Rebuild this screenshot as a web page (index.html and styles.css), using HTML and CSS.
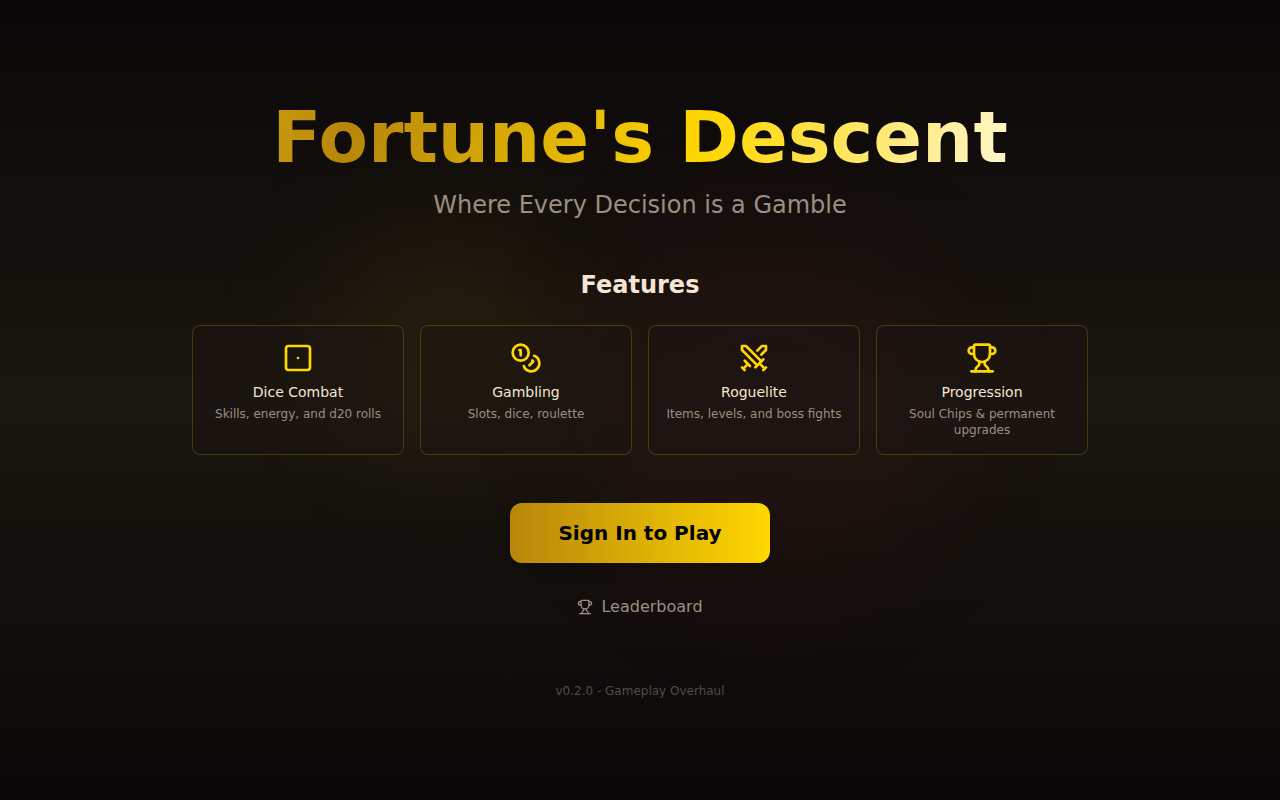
FILE: index.html
```html
<!DOCTYPE html>
<html lang="en">
<head>
<meta charset="utf-8">
<meta name="viewport" content="width=device-width, initial-scale=1">
<title>Fortune's Descent</title>
<link rel="stylesheet" href="styles.css">
</head>
<body>
<div class="page">
  <div class="glow glow-gold"></div>
  <div class="glow glow-crimson"></div>
  <main class="content">
    <h1 class="title">Fortune's Descent</h1>
    <p class="tagline">Where Every Decision is a Gamble</p>
    <h2 class="section-title">Features</h2>
    <ul class="features">
      <li class="card">
        <svg class="icon" viewBox="0 0 24 24" aria-hidden="true"><rect x="3" y="3" width="18" height="18" rx="2"/><path d="M12 12h.01"/></svg>
        <h3 class="card-title">Dice Combat</h3>
        <p class="card-text">Skills, energy, and d20 rolls</p>
      </li>
      <li class="card">
        <svg class="icon" viewBox="0 0 24 24" aria-hidden="true"><circle cx="8" cy="8" r="6"/><path d="M18.09 10.37A6 6 0 1 1 10.34 18"/><path d="M7 6h1v4"/><path d="m16.71 13.88.7.71-2.82 2.82"/></svg>
        <h3 class="card-title">Gambling</h3>
        <p class="card-text">Slots, dice, roulette</p>
      </li>
      <li class="card">
        <svg class="icon" viewBox="0 0 24 24" aria-hidden="true"><path d="M14.5 17.5 3 6V3h3l11.5 11.5"/><path d="m13 19 6-6"/><path d="m16 16 4 4"/><path d="m19 21 2-2"/><path d="M14.5 6.5 18 3h3v3l-3.5 3.5"/><path d="m5 14 4 4"/><path d="m7 17-3 3"/><path d="m3 19 2 2"/></svg>
        <h3 class="card-title">Roguelite</h3>
        <p class="card-text">Items, levels, and boss fights</p>
      </li>
      <li class="card">
        <svg class="icon" viewBox="0 0 24 24" aria-hidden="true"><path d="M10 14.66v1.626a2 2 0 0 1-.976 1.696A5 5 0 0 0 7 21.978"/><path d="M14 14.66v1.626a2 2 0 0 0 .976 1.696A5 5 0 0 1 17 21.978"/><path d="M18 9h1.5a1 1 0 0 0 0-5H18"/><path d="M4 22h16"/><path d="M6 9a6 6 0 0 0 12 0V3a1 1 0 0 0-1-1H7a1 1 0 0 0-1 1z"/><path d="M6 9H4.5a1 1 0 0 1 0-5H6"/></svg>
        <h3 class="card-title">Progression</h3>
        <p class="card-text">Soul Chips &amp; permanent upgrades</p>
      </li>
    </ul>
    <button class="play" type="button">Sign In to Play</button>
    <a class="leaderboard" href="#leaderboard">
      <svg class="icon icon-small" viewBox="0 0 24 24" aria-hidden="true"><path d="M10 14.66v1.626a2 2 0 0 1-.976 1.696A5 5 0 0 0 7 21.978"/><path d="M14 14.66v1.626a2 2 0 0 0 .976 1.696A5 5 0 0 1 17 21.978"/><path d="M18 9h1.5a1 1 0 0 0 0-5H18"/><path d="M4 22h16"/><path d="M6 9a6 6 0 0 0 12 0V3a1 1 0 0 0-1-1H7a1 1 0 0 0-1 1z"/><path d="M6 9H4.5a1 1 0 0 1 0-5H6"/></svg>
      Leaderboard
    </a>
    <p class="version">v0.2.0 - Gameplay Overhaul</p>
  </main>
</div>
</body>
</html>
```

FILE: styles.css
```css
*, *::before, *::after { box-sizing: border-box; }

body, h1, h2, h3, p, ul { margin: 0; padding: 0; }

body {
  background: #0a0808;
  color: #f5e6d3;
  font-family: "DejaVu Sans", sans-serif;
  font-size: 16px;
  line-height: 24px;
}

.page {
  position: relative;
  min-height: 100vh;
  overflow: hidden;
  display: flex;
  flex-direction: column;
  align-items: center;
  justify-content: center;
  padding: 32px;
  background: linear-gradient(to bottom, #0a0708, #1a1610 50%, #0a0708);
}

/* Soft lights behind the content */
.glow {
  position: absolute;
  border-radius: 50%;
  filter: blur(64px);
}

.glow-gold {
  top: 25%;
  left: 25%;
  width: 256px;
  height: 256px;
  background: rgba(255, 200, 0, 0.05);
}

.glow-crimson {
  right: 25%;
  bottom: 25%;
  width: 384px;
  height: 384px;
  background: rgba(200, 16, 46, 0.05);
}

.content {
  position: relative;
  width: 100%;
  max-width: 896px;
  display: flex;
  flex-direction: column;
  align-items: center;
  text-align: center;
}

.title {
  margin-bottom: 16px;
  font-size: 72px;
  line-height: 72px;
  font-weight: 700;
  background: linear-gradient(100deg, #c8990a 0%, #b8860b 11%, #ffd700 59%, #fff6cb 100%);
  -webkit-background-clip: text;
  background-clip: text;
  color: transparent;
}

.tagline {
  margin-bottom: 48px;
  font-size: 24px;
  line-height: 32px;
  color: #9a8f80;
}

.section-title {
  margin-bottom: 24px;
  font-size: 24px;
  line-height: 32px;
  font-weight: 700;
}

.features {
  width: 100%;
  margin-bottom: 48px;
  display: grid;
  grid-template-columns: repeat(auto-fit, minmax(200px, 1fr));
  gap: 16px;
  list-style: none;
}

.card {
  display: flex;
  flex-direction: column;
  align-items: center;
  padding: 16px;
  border: 1px solid rgba(255, 215, 0, 0.2);
  border-radius: 8px;
  background: rgba(28, 20, 17, 0.5);
}

.icon {
  width: 32px;
  height: 32px;
  fill: none;
  stroke: #ffd700;
  stroke-width: 2;
  stroke-linecap: round;
  stroke-linejoin: round;
}

.card-title {
  margin: 8px 0 4px;
  font-size: 14px;
  line-height: 20px;
  font-weight: 400;
}

.card-text {
  font-size: 12px;
  line-height: 16px;
  color: #9a8f80;
}

.play {
  margin-bottom: 32px;
  padding: 16px 48px;
  border: 0;
  border-radius: 12px;
  background: linear-gradient(to right, #b8860b, #ffd700);
  box-shadow: 0 10px 15px -3px rgba(0, 0, 0, 0.1), 0 4px 6px -4px rgba(0, 0, 0, 0.1);
  color: #000;
  font-family: inherit;
  font-size: 20px;
  line-height: 28px;
  font-weight: 700;
  cursor: pointer;
}

.leaderboard {
  margin-bottom: 64px;
  display: flex;
  align-items: center;
  gap: 8px;
  color: #9a8f80;
  text-decoration: none;
}

.icon-small {
  width: 16px;
  height: 16px;
  stroke: currentColor;
}

.version {
  font-size: 12px;
  line-height: 16px;
  color: #524c45;
}
```
